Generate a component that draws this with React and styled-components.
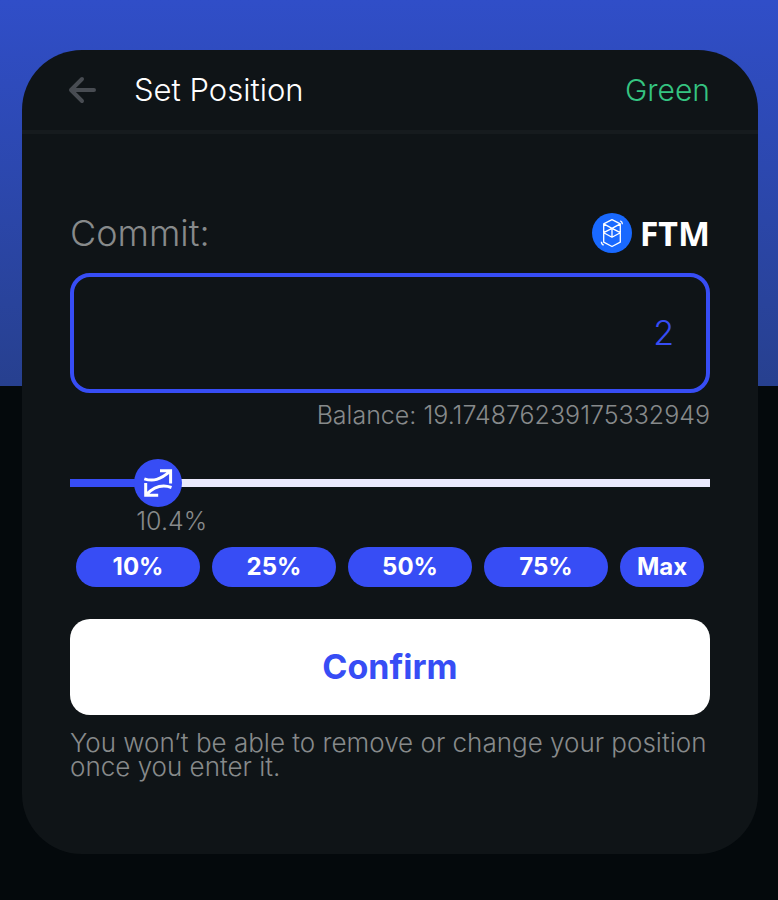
import React, { useState } from "react";
import styled, { createGlobalStyle } from "styled-components";

const BALANCE = "19.174876239175332949";
const KNOB = 48;
const PRESETS = [10, 25, 50, 75];

const GlobalStyle = createGlobalStyle`
  *, *::before, *::after { box-sizing: border-box; }
  body {
    margin: 0;
    min-height: 100vh;
    background: linear-gradient(#304ec8, #27408f) top / 100% 386px no-repeat #04090c;
    font-family: Inter, "Liberation Sans", sans-serif;
    font-weight: 300;
    color: #fff;
  }
  button, input { font: inherit; }
`;

const Page = styled.div`
  padding: 50px 20px 46px 22px;
`;

const Card = styled.main`
  background: #0f1417;
  border-radius: 60px;
  overflow: hidden;
`;

const Header = styled.header`
  display: flex;
  align-items: center;
  height: 84px;
  padding: 0 48px 0 44px;
  border-bottom: 4px solid #161b1e;
`;

const BackButton = styled.button`
  display: flex;
  padding: 0;
  border: 0;
  background: none;
  color: #484c52;
  cursor: pointer;
`;

const Title = styled.h1`
  flex: 1;
  margin: 0 0 0 28px;
  font-size: 31px;
  line-height: 36px;
  font-weight: 300;
`;

const Side = styled.span`
  font-size: 30px;
  line-height: 36px;
  color: #35c481;
`;

const Form = styled.form`
  padding: 79px 48px 75px;
`;

const FieldHead = styled.div`
  display: flex;
  align-items: center;
  justify-content: space-between;
  margin-bottom: 20px;
`;

const FieldLabel = styled.label`
  font-size: 36px;
  line-height: 40px;
  color: #878a8b;
`;

const Token = styled.span`
  display: flex;
  align-items: center;
  gap: 8px;
  font-family: "Noto Sans", sans-serif;
  font-size: 34px;
  line-height: 40px;
  font-weight: 700;
`;

const AmountInput = styled.input`
  display: block;
  width: 100%;
  height: 120px;
  padding: 0 32px 2px;
  border: 4px solid #374df5;
  border-radius: 20px;
  outline: none;
  background: transparent;
  color: #374df5;
  font-size: 34px;
  text-align: right;
`;

const Balance = styled.div`
  margin-top: 8px;
  font-size: 25px;
  line-height: 28px;
  color: #878a8b;
  text-align: right;
`;

const Slider = styled.div`
  position: relative;
  display: flex;
  align-items: center;
  height: 48px;
  margin-top: 30px;
`;

const Range = styled.input`
  appearance: none;
  width: 100%;
  height: 8px;
  margin: 0;
  outline: none;
  cursor: pointer;
  &::-webkit-slider-thumb {
    appearance: none;
    width: 48px;
    height: 48px;
    border-radius: 50%;
    background: transparent;
  }
`;

const Knob = styled.span`
  position: absolute;
  top: 0;
  display: flex;
  width: 48px;
  height: 48px;
  border-radius: 50%;
  background: #374df5;
  pointer-events: none;
`;

const Percent = styled.output`
  display: block;
  padding-left: 2px;
  font-size: 25px;
  line-height: 28px;
  color: #878a8b;
`;

const Presets = styled.div`
  display: flex;
  gap: 12px;
  margin-top: 12px;
  padding: 0 6px;
`;

const Pill = styled.button`
  flex: ${(p) => (p.$compact ? "0 0 84px" : "1")};
  height: 40px;
  padding: 0 0 2px;
  border: 0;
  border-radius: 20px;
  background: #374df5;
  color: #fff;
  font-size: 24px;
  font-weight: 700;
  cursor: pointer;
`;

const Confirm = styled.button`
  display: block;
  width: 100%;
  height: 96px;
  margin-top: 32px;
  padding: 0 0 2px;
  border: 0;
  border-radius: 20px;
  background: #fff;
  color: #374df5;
  font-size: 34px;
  font-weight: 700;
  cursor: pointer;
`;

const Note = styled.p`
  margin: 16px 0 0;
  font-size: 26px;
  line-height: 24px;
  color: #878a8b;
`;

function BackIcon() {
  return (
    <svg width="40" height="40" viewBox="0 0 40 40" fill="none" stroke="currentColor" strokeWidth="4" strokeLinecap="round" strokeLinejoin="round" aria-hidden="true">
      <path d="M28 20H5M16 9L5 20l11 11" />
    </svg>
  );
}

function FantomIcon() {
  return (
    <svg width="40" height="40" viewBox="0 0 40 40" fill="none" stroke="#fff" strokeWidth="1.3" strokeLinejoin="round" aria-hidden="true">
      <circle cx="20" cy="20" r="20" fill="#1969ff" stroke="none" />
      <path d="M11.7 10.900L20 6.700l8.300 4.200v18.300L20 33.500l-8.300-4.300zM11.700 10.900L20 15.400l8.300-4.500M11.700 19.700L20 15.400l8.300 4.300L20 24.200zM20 15.400v8.800" />
      <path d="M28.300 7.800q2.100.8 2.100 3.400M9.400 28.800q0 2.600 2.300 3.400" />
    </svg>
  );
}

function SwapIcon() {
  return (
    <svg width="48" height="48" viewBox="0 0 48 48" fill="none" stroke="#fff" strokeWidth="3" aria-hidden="true">
      <path d="M26 11.800h10.600v12.700M10.300 19.800C19 22.800 26 21 36.300 12.200M11.700 24v12.300h12.500M12.200 35.800C20 27.500 28 25 37.500 28.500" />
    </svg>
  );
}

export default function App() {
  const [amount, setAmount] = useState("2");
  const percent = Math.min(100, (Number(amount) / Number(BALANCE)) * 100 || 0);
  const choose = (p) => setAmount(String((Number(BALANCE) * p) / 100));
  const left = `calc((100% - ${KNOB / 2}px) * ${percent / 100})`;

  return (
    <Page>
      <GlobalStyle />
      <Card>
        <Header>
          <BackButton type="button" aria-label="Back"><BackIcon /></BackButton>
          <Title>Set Position</Title>
          <Side>Green</Side>
        </Header>
        <Form onSubmit={(e) => e.preventDefault()}>
          <FieldHead>
            <FieldLabel htmlFor="commit">Commit:</FieldLabel>
            <Token><FantomIcon />FTM</Token>
          </FieldHead>
          <AmountInput id="commit" inputMode="decimal" value={amount} onChange={(e) => setAmount(e.target.value)} />
          <Balance>Balance: {BALANCE}</Balance>
          <Slider>
            <Range
              type="range"
              aria-label="Share of balance"
              min="0"
              max="100"
              step="0.1"
              value={percent}
              onChange={(e) => choose(Number(e.target.value))}
              style={{ background: `linear-gradient(to right, #374df5 ${percent + 2}%, #ebeafd ${percent + 2}%)` }}
            />
            <Knob style={{ left }}><SwapIcon /></Knob>
          </Slider>
          <Percent htmlFor="commit" style={{ marginLeft: left }}>{percent.toFixed(1)}%</Percent>
          <Presets>
            {PRESETS.map((p) => (
              <Pill key={p} type="button" onClick={() => choose(p)}>{p}%</Pill>
            ))}
            <Pill type="button" $compact onClick={() => setAmount(BALANCE)}>Max</Pill>
          </Presets>
          <Confirm type="submit">Confirm</Confirm>
          <Note>You won’t be able to remove or change your position once you enter it.</Note>
        </Form>
      </Card>
    </Page>
  );
}
